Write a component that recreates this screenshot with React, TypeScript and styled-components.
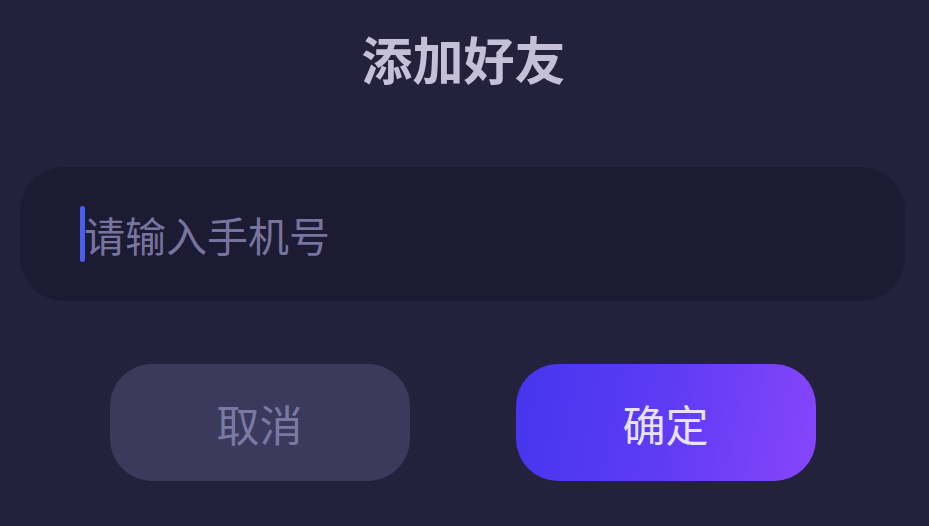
import React from "react";
import styled, { createGlobalStyle } from "styled-components";

const Global = createGlobalStyle`
  html, body { margin: 0; padding: 0; background: #24213d; }
  body { font-family: "Noto Sans CJK SC", "Noto Sans", sans-serif; }
`;

const Dialog = styled.div`
  width: 929px;
  height: 526px;
  background: #24213d;
  display: flex;
  flex-direction: column;
  align-items: stretch;
  box-sizing: border-box;
  padding: 28px 24px 0 20px;
`;

const Title = styled.h1`
  margin: 0;
  text-align: center;
  font-size: 51px;
  line-height: 60px;
  font-weight: 700;
  color: #c5c0d8;
  padding-left: 2px;
`;

const Field = styled.div`
  margin-top: 79px;
  height: 134px;
  border-radius: 44px;
  background: #1d1b33;
  display: flex;
  align-items: center;
  padding-left: 60px;
`;

const Caret = styled.span`
  width: 5px;
  height: 56px;
  border-radius: 3px;
  background: #4a5ef0;
  flex: none;
`;

const Placeholder = styled.span`
  font-size: 41px;
  line-height: 56px;
  color: #78749f;
  margin-left: -1px;
`;

const Actions = styled.div`
  margin-top: 63px;
  display: flex;
  justify-content: center;
  gap: 106px;
`;

const Button = styled.button<{ $primary?: boolean }>`
  width: 300px;
  height: 117px;
  border: none;
  border-radius: 42px;
  font-family: "Noto Sans CJK SC", "Noto Sans", sans-serif;
  font-size: 43px;
  padding: 0;
  color: ${(p) => (p.$primary ? "#e8e2f8" : "#7c78a4")};
  background: ${(p) =>
    p.$primary ? "linear-gradient(100deg, #4535ee 0%, #5e3cf4 50%, #8845fb 100%)" : "#3c3a5c"};
`;

export default function App() {
  return (
    <>
      <Global />
      <Dialog>
        <Title>添加好友</Title>
        <Field>
          <Caret />
          <Placeholder>请输入手机号</Placeholder>
        </Field>
        <Actions>
          <Button>取消</Button>
          <Button $primary>确定</Button>
        </Actions>
      </Dialog>
    </>
  );
}
